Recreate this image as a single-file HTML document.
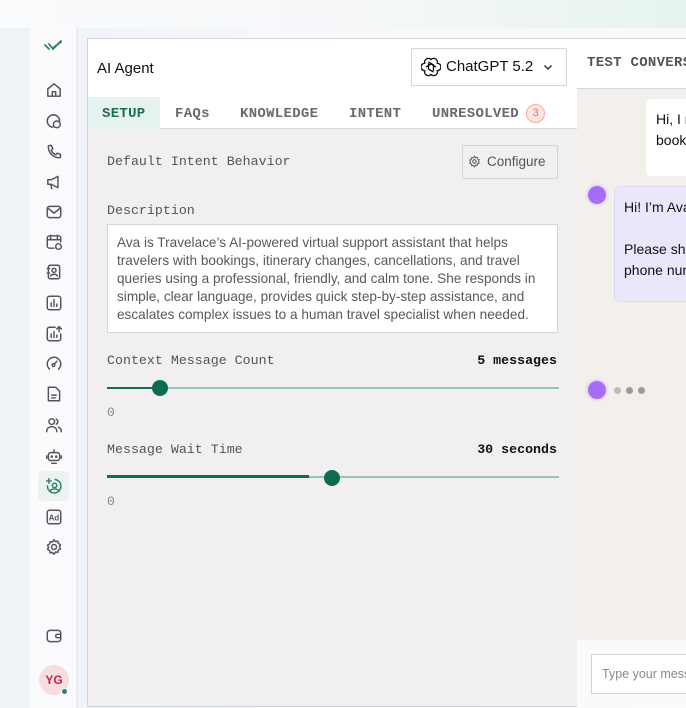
<!DOCTYPE html>
<html><head><meta charset="utf-8"><style>
*{box-sizing:border-box;margin:0;padding:0}
html,body{overflow:hidden}
body{width:686px;height:708px;overflow:hidden;position:relative;font-family:"Liberation Sans",sans-serif;background:linear-gradient(90deg,#eef3f8 0%,#f6f8fb 40%,#f7f9f9 100%)}
.top{position:absolute;left:0;top:0;width:686px;height:28px;background:linear-gradient(90deg,#fafbfc 0%,#f7f8f9 50%,#e5f3ee 100%)}
.side{position:absolute;left:30px;top:28px;width:48px;height:680px;background:#fbfbfd;border-right:2px solid #ecebf1}
.ic{position:absolute;left:45px;width:18px;height:18px}
.ic svg{width:18px;height:18px;fill:none;stroke:#55525c;stroke-width:1.3;stroke-linecap:round;stroke-linejoin:round}
.mono{font-family:"Liberation Mono",monospace}
.main{position:absolute;left:87px;top:38px;width:491px;height:669px;background:#f2eff1;border:1px solid #d6d3dd}
.hdr{position:absolute;left:0;top:0;width:489px;height:90px;background:#fff;border-bottom:1.5px solid #d6d3dd}
.tab{position:absolute;top:67px;font-family:"Liberation Mono",monospace;font-size:14px;font-weight:bold;color:#6b6772;letter-spacing:.3px}
.right{position:absolute;left:577px;top:38px;width:109px;height:669px;background:#f3f0eb;border-top:1px solid #d6d3dd;overflow:hidden}
</style></head><body>
<div class="top"></div>
<div class="side"></div>
<svg style="position:absolute;left:44px;top:39px" width="20" height="14" viewBox="0 0 20 14"><path d="M1 6l4 4M5 5l4 5 8-8M10 8l7-5" stroke="#2e8068" stroke-width="1.8" fill="none" stroke-linecap="round"/></svg>
<div class="ic" style="top:81px"><svg viewBox="0 0 16 16"><path d="M2.5 7L8 2.5 13.5 7v6.5h-11z M6.5 13.5v-4h3v4"/></svg></div>
<div class="ic" style="top:112px"><svg viewBox="0 0 16 16"><path d="M7 13.5A5.5 5.5 0 1 1 13 8"/><circle cx="10.5" cy="11" r="3"/></svg></div>
<div class="ic" style="top:143px"><svg viewBox="0 0 16 16"><path d="M3 2.5l2.5-.5 1.5 3-1.5 1.5a8 8 0 0 0 4 4L11 9l3 1.5-.5 2.5c-6 .5-11-4.5-10.5-10.5z"/></svg></div>
<div class="ic" style="top:173px"><svg viewBox="0 0 16 16"><path d="M2.5 6v4h3l6 3V3l-6 3z M5 10l1 4"/></svg></div>
<div class="ic" style="top:203px"><svg viewBox="0 0 16 16"><rect x="2" y="3" width="12" height="10" rx="2"/><path d="M2.5 4.5L8 9l5.5-4.5"/></svg></div>
<div class="ic" style="top:233px"><svg viewBox="0 0 16 16"><path d="M8 13.5H4a2 2 0 0 1-2-2v-7a2 2 0 0 1 2-2h8a2 2 0 0 1 2 2V8M2 6h12M5 2v3M11 2v3"/><circle cx="12" cy="12" r="2.5"/></svg></div>
<div class="ic" style="top:263px"><svg viewBox="0 0 16 16"><rect x="3" y="2" width="10" height="12" rx="1.5"/><circle cx="8" cy="6.5" r="1.8"/><path d="M5 11.5c1-2 5-2 6 0M2 5h2M2 9h2"/></svg></div>
<div class="ic" style="top:294px"><svg viewBox="0 0 16 16"><rect x="2" y="2" width="12" height="12" rx="2"/><path d="M5.5 11V8M8 11V5M10.5 11V9"/></svg></div>
<div class="ic" style="top:325px"><svg viewBox="0 0 16 16"><path d="M9 2H4a2 2 0 0 0-2 2v8a2 2 0 0 0 2 2h8a2 2 0 0 0 2-2V8M5.5 11V8M8 11V6M10.5 11V9M12.5 6V1.5M10.5 3.5l2-2 2 2"/></svg></div>
<div class="ic" style="top:355px"><svg viewBox="0 0 16 16"><path d="M4 12.5A6 6 0 1 1 12 12.5"/><circle cx="7.5" cy="9" r="1.2"/><path d="M8.5 8l2-2.5"/></svg></div>
<div class="ic" style="top:385px"><svg viewBox="0 0 16 16"><path d="M3 2h6.5L13 5.5V14H3z M6 9h4M6 11.5h3"/></svg></div>
<div class="ic" style="top:416px"><svg viewBox="0 0 16 16"><circle cx="6" cy="5" r="2.5"/><path d="M1.5 14c0-3 2-4.5 4.5-4.5s4.5 1.5 4.5 4.5M10 2.8a2.5 2.5 0 0 1 0 4.5M12 10c1.5.5 2.5 2 2.5 4"/></svg></div>
<div class="ic" style="top:447px"><svg viewBox="0 0 16 16"><rect x="3" y="5" width="10" height="7" rx="2"/><path d="M8 5V2.5M6 14.5h4M1.5 8v2M14.5 8v2"/><circle cx="6" cy="8.5" r=".5"/><circle cx="10" cy="8.5" r=".5"/></svg></div>
<div style="position:absolute;left:38px;top:471px;width:31px;height:30px;background:#ebf2f0;border-radius:5px"></div>
<div class="ic" style="top:477px"><svg viewBox="0 0 16 16" style="stroke:#2e8068"><path d="M9 2.2A6 6 0 1 1 2.2 8"/><circle cx="8.5" cy="7.5" r="2"/><path d="M4.5 12.5c1.5-2.5 6.5-2.5 8 0M3.5 1.5v4M1.5 3.5h4"/></svg></div>
<div class="ic" style="top:508px"><svg viewBox="0 0 16 16"><rect x="2" y="2" width="12" height="12" rx="2"/><text x="8" y="11" font-size="7" font-family="Liberation Sans" font-weight="bold" fill="#55525c" stroke="none" text-anchor="middle">Ad</text></svg></div>
<div class="ic" style="top:538px"><svg viewBox="0 0 16 16"><circle cx="8" cy="8" r="2.2"/><path d="M8 1.5l1.3 1.7 2.1-.4.5 2.1 1.9 1-1 1.9 1 1.9-1.9 1-.5 2.1-2.1-.4L8 14.5l-1.3-1.7-2.1.4-.5-2.1-1.9-1 1-1.9-1-1.9 1.9-1 .5-2.1 2.1.4z"/></svg></div>
<div class="ic" style="top:627px"><svg viewBox="0 0 16 16"><rect x="2" y="3" width="12" height="10" rx="2.5"/><path d="M14 6.5h-3a1.5 1.5 0 0 0 0 3h3"/></svg></div>
<div style="position:absolute;left:39px;top:665px;width:30px;height:30px;border-radius:50%;background:#f6dde2;color:#c32647;font-size:12px;font-weight:bold;text-align:center;line-height:30px">YG</div>
<div style="position:absolute;left:61px;top:688px;width:7px;height:7px;border-radius:50%;background:#1f8a5e;border:1px solid #fff"></div>

<div class="main">
 <div class="hdr">
  <div style="position:absolute;left:9px;top:21px;font-size:15px;color:#111">AI Agent</div>
  <div style="position:absolute;left:323px;top:9px;width:156px;height:38px;border:1.5px solid #d6d3dd;border-radius:2px">
   <svg style="position:absolute;left:9px;top:8px" width="20" height="20" viewBox="0 0 24 24" fill="none" stroke="#111" stroke-width="1.6"><path d="M12 3a4.5 4.5 0 0 1 7.5 4.5 4.5 4.5 0 0 1 0 9A4.5 4.5 0 0 1 12 21a4.5 4.5 0 0 1-7.5-4.5 4.5 4.5 0 0 1 0-9A4.5 4.5 0 0 1 12 3z M9 7.5v7l6 3.5M15 16.5v-7l-6-3.5M6 12l6-3.5 6 3.5"/></svg>
   <div style="position:absolute;left:34px;top:9px;font-size:15px;color:#111">ChatGPT 5.2</div>
   <svg style="position:absolute;left:131px;top:15px" width="10" height="7" viewBox="0 0 10 7"><path d="M1.5 1.5L5 5l3.5-3.5" stroke="#333" stroke-width="1.5" fill="none"/></svg>
  </div>
  <div style="position:absolute;left:0;top:58px;width:72px;height:32px;background:#e6f2ef"></div>
  <div class="tab" style="left:14px;color:#1d6d55">SETUP</div>
  <div class="tab" style="left:87px">FAQs</div>
  <div class="tab" style="left:152px">KNOWLEDGE</div>
  <div class="tab" style="left:261px">INTENT</div>
  <div class="tab" style="left:344px">UNRESOLVED</div>
  <div style="position:absolute;left:438px;top:65px;width:19px;height:19px;border-radius:50%;background:#fde6e1;border:1px solid #f7a89a;color:#ef6a55;font-size:11px;text-align:center;line-height:17px">3</div>
 </div>
 <div class="mono" style="position:absolute;left:19px;top:115px;font-size:13.3px;color:#55525c">Default Intent Behavior</div>
 <div style="position:absolute;left:374px;top:106px;width:96px;height:34px;border:1.5px solid #d6d3dd;border-radius:2px;font-size:13.5px;color:#55525c;padding:8px 0 0 24px">Configure</div>
 <svg style="position:absolute;left:380px;top:116px" width="13" height="13" viewBox="0 0 16 16" fill="none" stroke="#6b6772" stroke-width="1.4"><circle cx="8" cy="8" r="2.2"/><path d="M8 1.5l1.3 1.7 2.1-.4.5 2.1 1.9 1-1 1.9 1 1.9-1.9 1-.5 2.1-2.1-.4L8 14.5l-1.3-1.7-2.1.4-.5-2.1-1.9-1 1-1.9-1-1.9 1.9-1 .5-2.1 2.1.4z"/></svg>
 <div class="mono" style="position:absolute;left:19px;top:164px;font-size:13.3px;color:#55525c">Description</div>
 <div style="position:absolute;left:19px;top:185px;width:451px;height:109px;background:#fff;border:1.5px solid #d6d3dd;padding:9px 9px;font-size:13.6px;line-height:18px;color:#5a5760;white-space:nowrap">Ava is Travelace’s AI-powered virtual support assistant that helps<br>travelers with bookings, itinerary changes, cancellations, and travel<br>queries using a professional, friendly, and calm tone. She responds in<br>simple, clear language, provides quick step-by-step assistance, and<br>escalates complex issues to a human travel specialist when needed.</div>
 <div class="mono" style="position:absolute;left:19px;top:314px;font-size:13.3px;color:#55525c">Context Message Count</div>
 <div class="mono" style="position:absolute;right:20px;top:314px;font-size:13.3px;color:#111;font-weight:bold">5 messages</div>
 <div style="position:absolute;left:19px;top:348px;width:452px;height:2px;background:#93c4b7"></div>
 <div style="position:absolute;left:19px;top:348px;width:52px;height:2px;background:#116a52"></div>
 <div style="position:absolute;left:64px;top:341px;width:16px;height:16px;border-radius:50%;background:#0d6b52"></div>
 <div class="mono" style="position:absolute;left:19px;top:366px;font-size:13px;color:#8a8690">0</div>
 <div class="mono" style="position:absolute;left:19px;top:403px;font-size:13.3px;color:#55525c">Message Wait Time</div>
 <div class="mono" style="position:absolute;right:20px;top:403px;font-size:13.3px;color:#111;font-weight:bold">30 seconds</div>
 <div style="position:absolute;left:19px;top:437px;width:452px;height:2px;background:#93c4b7"></div>
 <div style="position:absolute;left:19px;top:436px;width:202px;height:3px;background:#116a52"></div>
 <div style="position:absolute;left:236px;top:431px;width:16px;height:16px;border-radius:50%;background:#0d6b52"></div>
 <div class="mono" style="position:absolute;left:19px;top:455px;font-size:13px;color:#8a8690">0</div>
</div>

<div class="right">
 <div style="position:absolute;left:0;top:0;width:109px;height:50px;background:#fff;border-bottom:1.5px solid #d6d3dd"></div>
 <div class="mono" style="position:absolute;left:10px;top:16px;font-size:14px;font-weight:bold;color:#55525c;white-space:nowrap;letter-spacing:.3px">TEST CONVERSATION</div>
 <div style="position:absolute;left:69px;top:60px;width:60px;height:77px;background:#fff;border-radius:5px;font-size:14px;line-height:21px;color:#111;padding:10px 10px;white-space:nowrap">Hi, I need help<br>booking</div>
 <div style="position:absolute;left:11px;top:147px;width:18px;height:18px;border-radius:50%;background:radial-gradient(circle at 40% 40%,#9f6cf8,#b06ef0);box-shadow:0 0 4px #c9a6ff"></div>
 <div style="position:absolute;left:37px;top:147px;width:90px;height:116px;background:#ebe7fa;border:1px solid #ddd7f3;border-radius:5px;font-size:14px;line-height:21px;color:#111;padding:10px 9px;white-space:nowrap">Hi! I’m Ava<br><br>Please share<br>phone number</div>
 <div style="position:absolute;left:11px;top:342px;width:18px;height:18px;border-radius:50%;background:radial-gradient(circle at 40% 40%,#9f6cf8,#b06ef0);box-shadow:0 0 4px #c9a6ff"></div>
 <div style="position:absolute;left:37px;top:348px;width:7px;height:7px;border-radius:50%;background:#bdbab6"></div>
 <div style="position:absolute;left:49px;top:348px;width:7px;height:7px;border-radius:50%;background:#9e9a96"></div>
 <div style="position:absolute;left:61px;top:348px;width:7px;height:7px;border-radius:50%;background:#9e9a96"></div>
 <div style="position:absolute;left:0;top:601px;width:109px;height:68px;background:#fbf9f9"></div>
 <div style="position:absolute;left:14px;top:615px;width:100px;height:40px;background:#fff;border:1.5px solid #d6d3dd;font-size:12.5px;color:#8a8690;padding:12px 10px;white-space:nowrap;overflow:hidden">Type your message</div>
</div>
</body></html>
